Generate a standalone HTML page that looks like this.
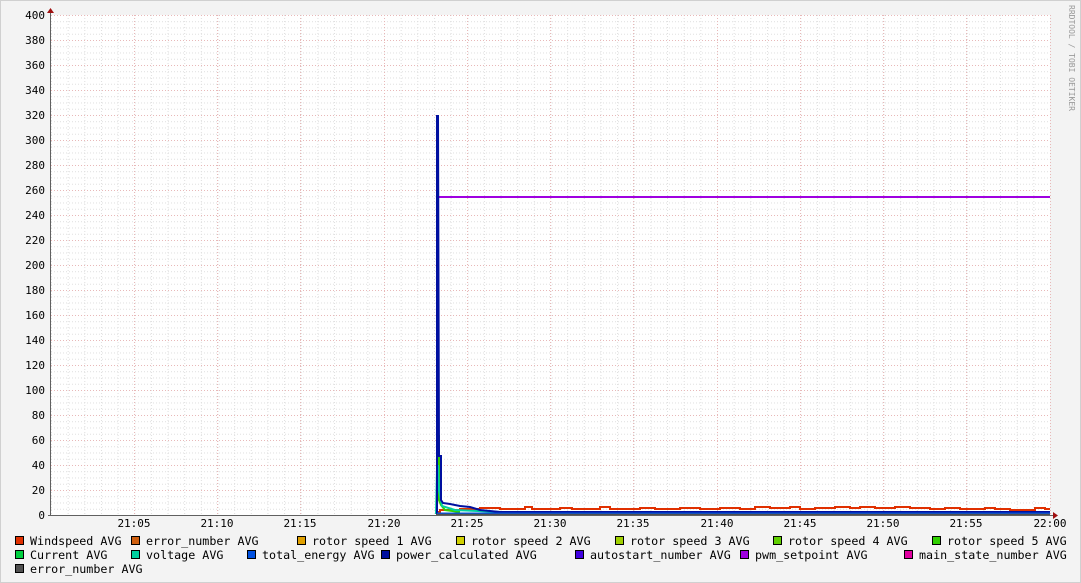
<!DOCTYPE html>
<html><head><meta charset="utf-8"><style>
html,body{margin:0;padding:0;background:#f3f3f3}
svg{display:block}
text{font-family:"DejaVu Sans Mono","Liberation Mono",monospace;font-size:11px;fill:#000}
.lg{font-size:11.7px}
</style></head><body>
<svg width="1081" height="583" viewBox="0 0 1081 583" xmlns="http://www.w3.org/2000/svg">
<defs>
<pattern id="mh" x="51" y="15" width="1000" height="6.25" patternUnits="userSpaceOnUse">
<line x1="0" y1="0.5" x2="1000" y2="0.5" stroke="#dedede" stroke-dasharray="1,2"/>
</pattern>
<pattern id="mv" x="51" y="0" width="16.65" height="600" patternUnits="userSpaceOnUse">
<line x1="0.5" y1="0" x2="0.5" y2="600" stroke="#dedede" stroke-dasharray="1,2"/>
</pattern>
</defs>
<rect x="0" y="0" width="1081" height="583" fill="#f3f3f3"/>
<rect x="0.5" y="0.5" width="1080" height="582" fill="none" stroke="#d0d0d0"/>
<rect x="51" y="15" width="999" height="500" fill="#ffffff"/>
<rect x="51" y="15" width="999" height="500" fill="url(#mh)"/>
<rect x="51" y="15" width="999" height="500" fill="url(#mv)"/>
<g stroke="#e8b8b8" stroke-dasharray="1,2">
<line x1="51" y1="15.5" x2="1050" y2="15.5"/><line x1="51" y1="40.5" x2="1050" y2="40.5"/><line x1="51" y1="65.5" x2="1050" y2="65.5"/><line x1="51" y1="90.5" x2="1050" y2="90.5"/><line x1="51" y1="115.5" x2="1050" y2="115.5"/><line x1="51" y1="140.5" x2="1050" y2="140.5"/><line x1="51" y1="165.5" x2="1050" y2="165.5"/><line x1="51" y1="190.5" x2="1050" y2="190.5"/><line x1="51" y1="215.5" x2="1050" y2="215.5"/><line x1="51" y1="240.5" x2="1050" y2="240.5"/><line x1="51" y1="265.5" x2="1050" y2="265.5"/><line x1="51" y1="290.5" x2="1050" y2="290.5"/><line x1="51" y1="315.5" x2="1050" y2="315.5"/><line x1="51" y1="340.5" x2="1050" y2="340.5"/><line x1="51" y1="365.5" x2="1050" y2="365.5"/><line x1="51" y1="390.5" x2="1050" y2="390.5"/><line x1="51" y1="415.5" x2="1050" y2="415.5"/><line x1="51" y1="440.5" x2="1050" y2="440.5"/><line x1="51" y1="465.5" x2="1050" y2="465.5"/><line x1="51" y1="490.5" x2="1050" y2="490.5"/>
<line x1="134.5" y1="15" x2="134.5" y2="515"/><line x1="217.5" y1="15" x2="217.5" y2="515"/><line x1="300.5" y1="15" x2="300.5" y2="515"/><line x1="384.5" y1="15" x2="384.5" y2="515"/><line x1="467.5" y1="15" x2="467.5" y2="515"/><line x1="550.5" y1="15" x2="550.5" y2="515"/><line x1="633.5" y1="15" x2="633.5" y2="515"/><line x1="717.5" y1="15" x2="717.5" y2="515"/><line x1="800.5" y1="15" x2="800.5" y2="515"/><line x1="883.5" y1="15" x2="883.5" y2="515"/><line x1="966.5" y1="15" x2="966.5" y2="515"/><line x1="1050.5" y1="15" x2="1050.5" y2="515"/>
</g>
<!-- data -->
<polyline fill="none" stroke="#e03000" stroke-width="2" points="438,512 440,512 440,510 460,510 460,509 480,509 480,508 500,508 500,509 525,509 525,507 532,507 532,509 560,509 560,508 572,508 572,509 600,509 600,507 610,507 610,509 640,509 640,508 655,508 655,509 680,509 680,508 700,508 700,509 720,509 720,508 740,508 740,509 755,509 755,507 770,507 770,508 790,508 790,507 800,507 800,509 815,509 815,508 835,508 835,507 850,507 850,508 860,508 860,507 875,507 875,508 895,508 895,507 910,507 910,508 930,508 930,509 945,509 945,508 960,508 960,509 985,509 985,508 995,508 995,509 1010,509 1010,510 1035,510 1035,508 1045,508 1045,509 1050,509"/>
<polyline fill="none" stroke="#30d000" stroke-width="2" points="437,515 437,505 438,436 439,436 439,500 441,505 445,510 460,512"/>
<polyline fill="none" stroke="#00d0a0" stroke-width="2" points="436,514 437,470 438,465 439,490 442,506 455,510 500,512"/>
<polyline fill="none" stroke="#a000e0" stroke-width="2" points="438,197 1050,197"/>
<polyline fill="none" stroke="#0010a0" stroke-width="2" points="437,515 437,116 438,116 439,456 441,456 441,500 443,503 450,504 460,506 470,507 480,510 490,511 500,512 1050,512"/>
<line x1="437" y1="513.5" x2="1050" y2="513.5" stroke="#0050e0" stroke-width="2"/>
<line x1="436" y1="514.5" x2="1050" y2="514.5" stroke="#505050" stroke-width="1.5"/>
<!-- axes -->
<line x1="50.5" y1="10" x2="50.5" y2="516" stroke="#606060"/>
<line x1="48" y1="515.5" x2="1055" y2="515.5" stroke="#606060"/>
<polygon points="47,13 54,13 50.5,8" fill="#a01010"/>
<polygon points="1053,512 1053,519 1058,515.5" fill="#a01010"/>
<!-- y labels -->
<g text-anchor="end">
<text x="45" y="19">400</text><text x="45" y="44">380</text><text x="45" y="69">360</text><text x="45" y="94">340</text><text x="45" y="119">320</text><text x="45" y="144">300</text><text x="45" y="169">280</text><text x="45" y="194">260</text><text x="45" y="219">240</text><text x="45" y="244">220</text><text x="45" y="269">200</text><text x="45" y="294">180</text><text x="45" y="319">160</text><text x="45" y="344">140</text><text x="45" y="369">120</text><text x="45" y="394">100</text><text x="45" y="419">80</text><text x="45" y="444">60</text><text x="45" y="469">40</text><text x="45" y="494">20</text><text x="45" y="519">0</text>
</g>
<g text-anchor="middle">
<text x="134" y="527">21:05</text><text x="217" y="527">21:10</text><text x="300" y="527">21:15</text><text x="384" y="527">21:20</text><text x="467" y="527">21:25</text><text x="550" y="527">21:30</text><text x="633" y="527">21:35</text><text x="717" y="527">21:40</text><text x="800" y="527">21:45</text><text x="883" y="527">21:50</text><text x="966" y="527">21:55</text><text x="1050" y="527">22:00</text>
</g>
<text x="1069" y="5" transform="rotate(90 1069 5)" style="font-size:8px;fill:#999">RRDTOOL / TOBI OETIKER</text>
<!-- legend -->
<g stroke="#000" stroke-width="1">
<rect x="15.5" y="536.5" width="8" height="8" fill="#e03000"/>
<rect x="131.5" y="536.5" width="8" height="8" fill="#d06010"/>
<rect x="297.5" y="536.5" width="8" height="8" fill="#e0a000"/>
<rect x="456.5" y="536.5" width="8" height="8" fill="#d0d000"/>
<rect x="615.5" y="536.5" width="8" height="8" fill="#a0d000"/>
<rect x="773.5" y="536.5" width="8" height="8" fill="#60d000"/>
<rect x="932.5" y="536.5" width="8" height="8" fill="#30d000"/>
<rect x="15.5" y="550.5" width="8" height="8" fill="#00d040"/>
<rect x="131.5" y="550.5" width="8" height="8" fill="#00d0a0"/>
<rect x="247.5" y="550.5" width="8" height="8" fill="#0050e0"/>
<rect x="381.5" y="550.5" width="8" height="8" fill="#0010a0"/>
<rect x="575.5" y="550.5" width="8" height="8" fill="#4000e0"/>
<rect x="740.5" y="550.5" width="8" height="8" fill="#a000e0"/>
<rect x="904.5" y="550.5" width="8" height="8" fill="#e000a0"/>
<rect x="15.5" y="564.5" width="8" height="8" fill="#505050"/>
</g>
<g class="lg">
<text class="lg" x="30" y="545">Windspeed AVG</text>
<text class="lg" x="146" y="545">error_number AVG</text>
<text class="lg" x="312" y="545">rotor speed 1 AVG</text>
<text class="lg" x="471" y="545">rotor speed 2 AVG</text>
<text class="lg" x="630" y="545">rotor speed 3 AVG</text>
<text class="lg" x="788" y="545">rotor speed 4 AVG</text>
<text class="lg" x="947" y="545">rotor speed 5 AVG</text>
<text class="lg" x="30" y="559">Current AVG</text>
<text class="lg" x="146" y="559">voltage AVG</text>
<text class="lg" x="262" y="559">total_energy AVG</text>
<text class="lg" x="396" y="559">power_calculated AVG</text>
<text class="lg" x="590" y="559">autostart_number AVG</text>
<text class="lg" x="755" y="559">pwm_setpoint AVG</text>
<text class="lg" x="919" y="559">main_state_number AVG</text>
<text class="lg" x="30" y="573">error_number AVG</text>
</g>
</svg>
</body></html>
